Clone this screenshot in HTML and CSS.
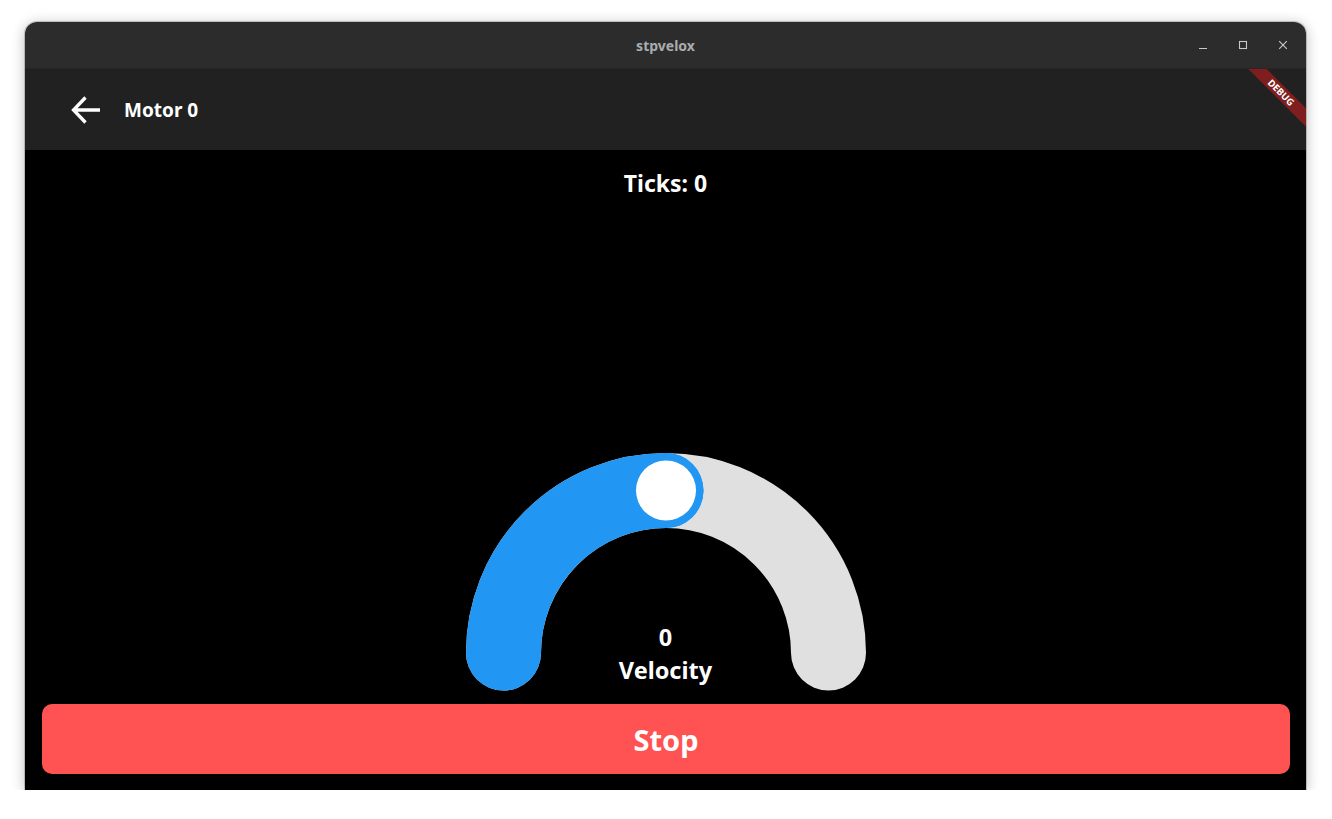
FILE: index.html
```html
<!DOCTYPE html>
<html>
<head>
<meta charset="utf-8">
<title>stpvelox</title>
<link rel="stylesheet" href="styles.css">
</head>
<body>
<div class="window">
  <div class="titlebar">
    <div></div>
    <div class="title">stpvelox</div>
    <div class="controls">
      <span class="ctl"><svg width="10" height="10" viewBox="0 0 10 10"><path d="M1 8.5H9" stroke="#c8c8c8" stroke-width="1.2"/></svg></span>
      <span class="ctl"><svg width="10" height="10" viewBox="0 0 10 10"><rect x="1.5" y="1.5" width="7" height="7" fill="none" stroke="#c8c8c8" stroke-width="1.1"/></svg></span>
      <span class="ctl"><svg width="10" height="10" viewBox="0 0 10 10"><path d="M1.2 1.2L8.8 8.8M8.8 1.2L1.2 8.8" stroke="#c8c8c8" stroke-width="1.2"/></svg></span>
    </div>
  </div>
  <div class="app">
    <div class="appbar">
      <svg class="back" width="30" height="28" viewBox="0 0 30 28">
        <path d="M2.5 14H29M14.5 1.5L2.5 14L14.5 26.5" fill="none" stroke="#fff" stroke-width="3.3" stroke-linecap="butt" stroke-linejoin="miter"/>
      </svg>
      <div class="apptitle">Motor 0</div>
      <div class="debug">DEBUG</div>
    </div>
    <div class="content">
      <div class="ticks">Ticks: 0</div>
      <div class="spacer"></div>
      <div class="gauge">
        <svg width="400" height="238" viewBox="0 0 400 238">
          <path d="M37.5 200A162.5 162.5 0 0 1 362.5 200" fill="none" stroke="#e0e0e0" stroke-width="75" stroke-linecap="round"/>
          <path d="M37.5 200A162.5 162.5 0 0 1 200 37.5" fill="none" stroke="#2196f3" stroke-width="75" stroke-linecap="round"/>
          <circle cx="200" cy="37.5" r="37.5" fill="#2196f3"/>
          <circle cx="200" cy="37.5" r="30" fill="#fff"/>
        </svg>
        <div class="labels">
          <div class="value">0</div>
          <div class="label">Velocity</div>
        </div>
      </div>
      <button class="stop">Stop</button>
    </div>
  </div>
</div>
</body>
</html>
```
FILE: styles.css
```css
html, body {
  margin: 0;
  padding: 0;
  background: #ffffff;
}
body {
  padding: 22px 0 0 25px;
  font-family: "Noto Sans", "Open Sans", sans-serif;
}
.window {
  width: 1281px;
  height: 768px;
  border-radius: 12px 12px 0 0;
  overflow: hidden;
  display: flex;
  flex-direction: column;
  box-shadow: 0 2px 14px rgba(0, 0, 0, 0.28), 0 0 0 1px rgba(0, 0, 0, 0.18);
}
.titlebar {
  height: 47px;
  flex: none;
  background: #2c2c2c;
  display: grid;
  grid-template-columns: 1fr auto 1fr;
  align-items: center;
  border-bottom: 1px solid #262626;
  box-sizing: border-box;
}
.title {
  color: #a9adb0;
  font-weight: 700;
  font-size: 14px;
  letter-spacing: 0;
}
.controls {
  justify-self: end;
  display: flex;
  gap: 16px;
  padding-right: 11px;
}
.ctl {
  width: 24px;
  height: 24px;
  display: flex;
  align-items: center;
  justify-content: center;
}
.app {
  flex: 1;
  display: flex;
  flex-direction: column;
  position: relative;
  overflow: hidden;
}
.appbar {
  height: 81px;
  flex: none;
  background: #212121;
  display: flex;
  align-items: center;
  position: relative;
}
.back {
  margin-left: 46px;
  margin-right: 23px;
}
.apptitle {
  color: #fff;
  font-weight: 700;
  font-size: 19px;
  padding-top: 1px;
}
.debug {
  position: absolute;
  left: 1206px;
  top: 17px;
  width: 100px;
  height: 13px;
  background: #7f1e1e;
  color: #fff;
  font-size: 9.5px;
  font-weight: 700;
  line-height: 13px;
  text-align: center;
  transform: rotate(45deg);
}
.content {
  flex: 1;
  background: #000;
  display: flex;
  flex-direction: column;
  align-items: center;
}
.ticks {
  margin-top: 18px;
  height: 30px;
  line-height: 30px;
  color: #fff;
  font-size: 23px;
  font-weight: 700;
}
.spacer {
  flex: 1;
}
.gauge {
  position: relative;
  width: 400px;
  height: 238px;
}
.gauge svg {
  display: block;
}
.labels {
  position: absolute;
  left: 0;
  right: 0;
  top: 168px;
  text-align: center;
  color: #fff;
  font-weight: 700;
  font-size: 23.5px;
  line-height: 33px;
}
.stop {
  align-self: stretch;
  margin: 13px 16px 16px 17px;
  height: 70px;
  border: none;
  border-radius: 10px;
  background: #ff5252;
  color: #fff;
  font-family: inherit;
  font-weight: 700;
  font-size: 29px;
  padding: 0;
}
```
